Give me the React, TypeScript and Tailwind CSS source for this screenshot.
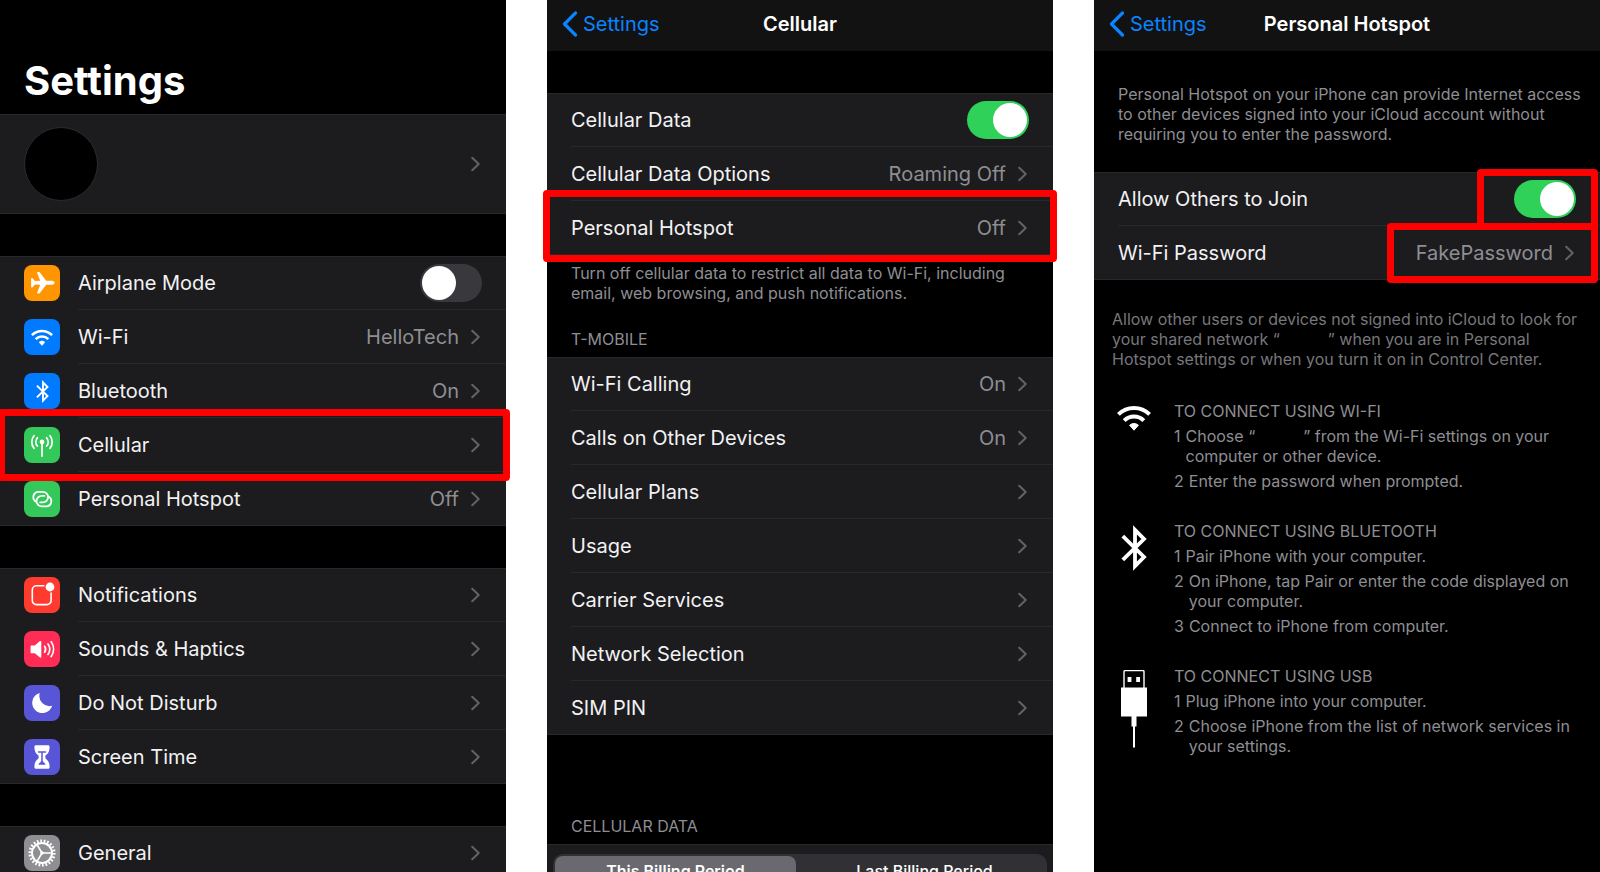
import { ReactNode, useState } from 'react';
import clsx from 'clsx';

/* ---------- Icons ---------- */

function Chevron() {
  return (
    <svg className="h-4 w-[11px] shrink-0 text-[#636366]" viewBox="0 0 11 16" fill="none" stroke="currentColor" strokeWidth="2" strokeLinecap="round" strokeLinejoin="round" aria-hidden="true">
      <path d="M1.2 1.7 7.700 8 1.2 14.300" />
    </svg>
  );
}

function WifiIcon({ className }: { className: string }) {
  return (
    <svg className={className} viewBox="0 0 34 26" fill="none" stroke="currentColor" strokeWidth="4" aria-hidden="true">
      <path d="M1.4 9.400a22 22 0 0 1 31.200 0" />
      <path d="M7.200 15.600a13.900 13.900 0 0 1 19.600 0" />
      <path d="M17 25.200l-4.400-5a6.600 6.600 0 0 1 8.800 0z" fill="currentColor" strokeWidth="1" strokeLinejoin="round" />
    </svg>
  );
}

function BluetoothIcon({ className }: { className: string }) {
  return (
    <svg className={className} viewBox="0 0 26 46" fill="none" stroke="currentColor" strokeWidth="3.8" aria-hidden="true">
      <path d="M1.8 11.2 23 32 14 41.2V4.8L23 14 1.8 34.8" />
    </svg>
  );
}

function UsbIcon() {
  return (
    <svg className="h-[78px] w-[26px]" viewBox="0 0 26 78" fill="currentColor" aria-hidden="true">
      <rect x="3" y=".6" width="20" height="18" rx="1" fill="none" stroke="currentColor" strokeWidth="1.4" />
      <rect x="6.6" y="7" width="3.8" height="5" />
      <rect x="15.2" y="7" width="3.8" height="5" />
      <rect y="17.5" width="26" height="29" />
      <rect x="10.5" y="46" width="5" height="10.5" />
      <rect x="12" y="56" width="2" height="21.5" />
    </svg>
  );
}

function Glyph({ children }: { children: ReactNode }) {
  return (
    <svg className="size-9" viewBox="0 0 36 36" fill="none" stroke="white" strokeWidth="1.8" strokeLinecap="round" strokeLinejoin="round" aria-hidden="true">
      {children}
    </svg>
  );
}

const airplane = (
  <Glyph>
    <path
      d="M30.6 17.8c0-1.4-1.9-2-3.6-2h-4.8l-6.3-8.2c-.3-.4-.7-.6-1.2-.6h-1c-.5 0-.7.5-.5 1l3 7.8-5.3.3-2.1-2.7c-.2-.3-.5-.4-.8-.4h-.3c-.4 0-.6.3-.6.7v8.2c0 .4.2.7.6.7H8c.3 0 .6-.1.8-.4l2.1-2.7 5.3.3-3 7.8c-.2.5 0 1 .5 1h1c.5 0 .9-.2 1.2-.6l6.3-8.2H27c1.7 0 3.6-.6 3.6-2z"
      fill="white"
      stroke="none"
    />
  </Glyph>
);

const antenna = (
  <Glyph>
    <circle cx="18" cy="14.9" r="2.4" fill="white" stroke="none" />
    <path d="M18 15v14" />
    <path d="M13.4 10.8a6.2 6.2 0 0 0 0 8.2M22.6 10.8a6.2 6.2 0 0 1 0 8.2M10 8.8a9.8 9.8 0 0 0 0 12.4M26 8.8a9.8 9.8 0 0 1 0 12.4" />
  </Glyph>
);

const hotspot = (
  <Glyph>
    <path d="M12 20.6a5.3 5.3 0 0 1 1.5-9.8h5.3a5.3 5.3 0 0 1 0 10.6h-2.6" />
    <path d="M24.6 15.6a5.3 5.3 0 0 1-1.500 9.800h-5.300a5.300 5.300 0 0 1 0-10.600h2.600" />
  </Glyph>
);

const notifications = (
  <Glyph>
    <path d="M19.8 8.8h-7.3a4.2 4.2 0 0 0-4.2 4.2v10.4a4.2 4.2 0 0 0 4.2 4.2h10.4a4.2 4.2 0 0 0 4.2-4.2v-7.3" strokeWidth="1.6" />
    <circle cx="26" cy="10" r="4.4" fill="white" stroke="none" />
  </Glyph>
);

const sounds = (
  <Glyph>
    <path d="M6.6 15.4c0-.6.4-1 1-1h3.2l5.2-4.3c.6-.5 1.3-.1 1.3.6v15.2c0 .7-.7 1.1-1.3.6L10.8 22.2H7.6c-.6 0-1-.4-1-1z" fill="white" stroke="none" />
    <path d="M20.6 15.200a5.200 5.200 0 0 1 0 6M24 13a9 9 0 0 1 0 10.400M27.200 10.800a13 13 0 0 1 0 14.800" strokeWidth="1.700" />
  </Glyph>
);

const moon = (
  <Glyph>
    <path d="M15.8 8A10.200 10.200 0 1 0 28.200 20.800 10.200 10.200 0 0 1 15.800 8z" fill="white" stroke="none" />
  </Glyph>
);

const hourglass = (
  <Glyph>
    <path d="M12 6.300h12c1 0 1.600.6 1.600 1.500 0 4-1.200 6.400-3.200 8-.9.700-1.100 1.300-1.100 2.200s.2 1.500 1.100 2.200c2 1.600 3.200 4 3.200 8 0 .9-.6 1.500-1.600 1.500H12c-1 0-1.600-.6-1.600-1.500 0-4 1.200-6.400 3.200-8 .9-.7 1.100-1.300 1.100-2.200s-.2-1.500-1.100-2.200c-2-1.600-3.200-4-3.200-8 0-.9.600-1.500 1.600-1.500z" fill="white" stroke="none" />
    <path d="M14.500 13h7M18 13v10" stroke="#5856d6" strokeWidth="1.500" />
    <path d="M14.400 25.700c.8-1.900 2.300-2.400 2.900-3.700h1.400c.6 1.300 2.100 1.800 2.900 3.700z" fill="#5856d6" stroke="none" />
  </Glyph>
);

const gear = (
  <Glyph>
    <circle cx="18" cy="18" r="12.2" strokeWidth="2.800" strokeLinecap="butt" pathLength="44" strokeDasharray="1 1" />
    <circle cx="18" cy="18" r="10" strokeWidth="2" />
    <path d="M18 18h9.500M18 18l-4.800-8.200M18 18l-4.800 8.200" strokeWidth="1.600" />
    <circle cx="18" cy="18" r="1.800" fill="white" stroke="none" />
  </Glyph>
);

/* ---------- Building blocks ---------- */

interface RowProps {
  label: string;
  value?: string;
  icon?: ReactNode;
  tile?: string;
  toggle?: boolean;
  highlight?: string;
}

function Row({ label, value, icon, tile, toggle, highlight }: RowProps) {
  const [on, setOn] = useState(toggle ?? false);
  const Tag = toggle === undefined ? 'button' : 'label';

  return (
    <li className="group relative">
      <Tag className="flex h-[54px] w-full items-center gap-[18px] pl-6 text-left text-xl text-[#f2f2f4]">
        {icon && <span className={clsx('flex size-9 shrink-0 items-center justify-center rounded-lg text-white', tile)}>{icon}</span>}
        <span className="flex h-full min-w-0 flex-1 items-center gap-3 border-b border-[#28282a] pr-6 group-last:border-transparent">
          <span className="flex-1">{label}</span>
          {toggle === undefined ? (
            <>
              {value && <span className="text-[#8e8e93]">{value}</span>}
              <Chevron />
            </>
          ) : (
            <input
              type="checkbox"
              role="switch"
              checked={on}
              onChange={() => setOn(!on)}
              className="h-[38px] w-[62px] appearance-none rounded-full bg-[#39393d] p-[2px] before:block before:size-[34px] before:rounded-full before:bg-white checked:bg-[#30d158] checked:before:translate-x-6"
            />
          )}
        </span>
      </Tag>
      {highlight && <span className={clsx('pointer-events-none absolute z-10 rounded-[4px] border-[7px] border-[#ff0000]', highlight)} />}
    </li>
  );
}

function Group({ children }: { children: ReactNode }) {
  return (
    <ul className="bg-[#1c1c1e] shadow-[inset_0_1px_0_#28282a,inset_0_-1px_0_#28282a]">{children}</ul>
  );
}

function NavBar({ title }: { title: string }) {
  return (
    <header className="grid h-[51px] grid-cols-[1fr_auto_1fr] items-center bg-[#121212] px-[15px] text-xl">
      <a href="#settings" className="flex items-center gap-[5px] pb-[3px] text-[#0a84ff]">
        <svg className="h-[26px] w-4" viewBox="0 0 16 26" fill="none" stroke="currentColor" strokeWidth="3.2" strokeLinecap="round" strokeLinejoin="round" aria-hidden="true">
          <path d="M13.5 2 2.5 13l11 11" />
        </svg>
        Settings
      </a>
      <h1 className="pb-[3px] font-semibold text-white">{title}</h1>
    </header>
  );
}

function Steps({ icon, title, items }: { icon: ReactNode; title: string; items: ReactNode[] }) {
  return (
    <section className="flex gap-[18px]">
      <div className="flex w-11 justify-center self-start pt-1 text-white">{icon}</div>
      <div className="flex-1">
        <h2>{title}</h2>
        <ol>
          {items.map((item, i) => (
            <li key={i} className="mt-[5px] flex gap-[5px]">
              <span>{i + 1}</span>
              <span>{item}</span>
            </li>
          ))}
        </ol>
      </div>
    </section>
  );
}

/* ---------- Screens ---------- */

function SettingsScreen() {
  return (
    <main className="bg-black">
      <h1 className="flex h-[114px] items-end pb-[9px] pl-6 text-[40px] leading-12 font-bold text-white">Settings</h1>
      <div className="flex flex-col gap-[42px]">
        <button aria-label="Profile" className="flex h-[100px] items-center justify-between bg-[#1c1c1e] px-6 shadow-[inset_0_1px_0_#28282a,inset_0_-1px_0_#28282a]">
          <span className="size-[74px] rounded-full border border-[#2c2c2e] bg-black" />
          <Chevron />
        </button>
        <Group>
          <Row label="Airplane Mode" icon={airplane} tile="bg-[#ff9500]" toggle={false} />
          <Row label="Wi-Fi" value="HelloTech" icon={<WifiIcon className="h-[17px] w-[22px]" />} tile="bg-[#007aff]" />
          <Row label="Bluetooth" value="On" icon={<BluetoothIcon className="h-[23px] w-[13px]" />} tile="bg-[#007aff]" />
          <Row label="Cellular" icon={antenna} tile="bg-[#34c759]" highlight="-inset-y-[9px] -left-[2px] -right-1" />
          <Row label="Personal Hotspot" value="Off" icon={hotspot} tile="bg-[#34c759]" />
        </Group>
        <Group>
          <Row label="Notifications" icon={notifications} tile="bg-[#ff3b30]" />
          <Row label="Sounds &amp; Haptics" icon={sounds} tile="bg-[#ff2d55]" />
          <Row label="Do Not Disturb" icon={moon} tile="bg-[#5856d6]" />
          <Row label="Screen Time" icon={hourglass} tile="bg-[#5856d6]" />
        </Group>
        <Group>
          <Row label="General" icon={gear} tile="bg-[#8e8e93]" />
        </Group>
      </div>
    </main>
  );
}

function CellularScreen() {
  return (
    <main className="bg-black text-base leading-5 text-[#8e8e93]">
      <NavBar title="Cellular" />
      <div className="pt-[42px]">
        <Group>
          <Row label="Cellular Data" toggle={true} />
          <Row label="Cellular Data Options" value="Roaming Off" />
          <Row label="Personal Hotspot" value="Off" highlight="-top-[11px] -bottom-[7px] -inset-x-1" />
        </Group>
      </div>
      <p className="px-6 pt-2">Turn off cellular data to restrict all data to Wi-Fi, including email, web browsing, and push notifications.</p>
      <h2 className="px-6 pt-[26px] pb-2">T-MOBILE</h2>
      <Group>
        <Row label="Wi-Fi Calling" value="On" />
        <Row label="Calls on Other Devices" value="On" />
        <Row label="Cellular Plans" />
        <Row label="Usage" />
        <Row label="Carrier Services" />
        <Row label="Network Selection" />
        <Row label="SIM PIN" />
      </Group>
      <h2 className="px-6 pt-[81px] pb-2">CELLULAR DATA</h2>
      <div className="bg-[#1c1c1e] px-[6px] py-[10px] shadow-[inset_0_1px_0_#28282a]">
        <div className="grid h-[34px] grid-cols-2 gap-2 rounded-[10px] bg-[#313135] p-[2px] text-base leading-5 text-white">
          <button className="rounded-lg bg-[#69696f] font-semibold">This Billing Period</button>
          <button className="font-medium">Last Billing Period</button>
        </div>
      </div>
    </main>
  );
}

function HotspotScreen() {
  return (
    <main className="bg-black text-base leading-5 text-[#8e8e93]">
      <NavBar title="Personal Hotspot" />
      <p className="pt-[33px] pr-4 pb-7 pl-6">
        Personal Hotspot on your iPhone can provide Internet access to other devices signed into your iCloud account without requiring you to enter the password.
      </p>
      <Group>
        <Row label="Allow Others to Join" toggle={true} highlight="-top-[3px] -bottom-1 right-[2px] w-[121px]" />
        <Row label="Wi-Fi Password" value="FakePassword" highlight="-inset-y-[3px] right-[2px] w-[211px]" />
      </Group>
      <p className="pt-[29px] pr-4 pb-8 pl-[18px] text-[#77777b]">
        Allow other users or devices not signed into iCloud to look for your shared network “<span className="inline-block w-12" />” when you are in Personal Hotspot settings or when you turn it on in Control Center.
      </p>
      <div className="flex flex-col gap-[30px] pr-6 pl-[18px]">
        <Steps
          icon={<WifiIcon className="h-[26px] w-[34px]" />}
          title="TO CONNECT USING WI-FI"
          items={[
            <>
              Choose “<span className="inline-block w-12" />” from the Wi-Fi settings on your computer or other device.
            </>,
            'Enter the password when prompted.',
          ]}
        />
        <Steps
          icon={<BluetoothIcon className="h-[46px] w-[26px]" />}
          title="TO CONNECT USING BLUETOOTH"
          items={[
            'Pair iPhone with your computer.',
            'On iPhone, tap Pair or enter the code displayed on your computer.',
            'Connect to iPhone from computer.',
          ]}
        />
        <Steps
          icon={<UsbIcon />}
          title="TO CONNECT USING USB"
          items={['Plug iPhone into your computer.', 'Choose iPhone from the list of network services in your settings.']}
        />
      </div>
    </main>
  );
}

export default function App() {
  return (
    <div className="grid h-screen grid-cols-3 gap-[41px] overflow-hidden bg-white font-['Inter',sans-serif]">
      <SettingsScreen />
      <CellularScreen />
      <HotspotScreen />
    </div>
  );
}
